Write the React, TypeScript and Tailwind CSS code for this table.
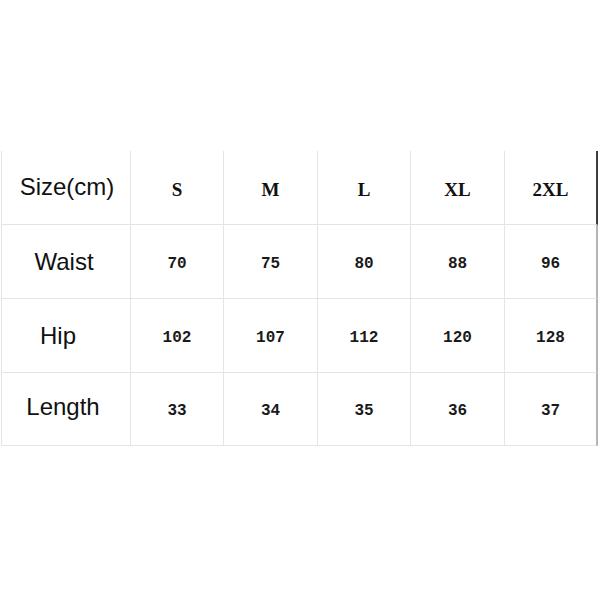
import React from "react";

const cols = ["S", "M", "L", "XL", "2XL"];
const rows: { label: string; vals: string[]; shift: string }[] = [
  { label: "Waist", vals: ["70", "75", "80", "88", "96"], shift: "pr-[4px] pt-[1px]" },
  { label: "Hip", vals: ["102", "107", "112", "120", "128"], shift: "pr-[16px]" },
  { label: "Length", vals: ["33", "34", "35", "36", "37"], shift: "pr-[6px] pb-[5px]" },
];
const heights = ["h-[74px]", "h-[74px]", "h-[73px]"];

export default function App() {
  return (
    <div className="w-[600px] h-[600px] bg-white pt-[151px]">
      <div className="ml-[1px] w-[597px] border-l border-[#e4e4e4] grid grid-cols-[129px_93px_94px_93px_94px_93px]">
        <div className="h-[74px] border-r border-b border-[#e4e4e4] flex items-center justify-center pl-[2px] pb-[1px] text-[24px] text-[#111] [font-family:'Liberation_Sans',Arial,sans-serif]">
          Size(cm)
        </div>
        {cols.map((c, i) => (
          <div
            key={c}
            className={`h-[74px] border-b border-[#e4e4e4] flex items-center justify-center pt-[6px] text-[19px] font-bold text-[#111] [font-family:'Liberation_Serif','Times_New_Roman',serif] ${
              i === 4 ? "border-r-2 border-r-[#3c3c44]" : "border-r"
            }`}
          >
            {c}
          </div>
        ))}
        {rows.map((r, ri) => (
          <React.Fragment key={r.label}>
            <div
              className={`${heights[ri]} border-r border-b border-[#e4e4e4] flex items-center justify-center ${r.shift} text-[24px] text-[#111] [font-family:'Liberation_Sans',Arial,sans-serif]`}
            >
              {r.label}
            </div>
            {r.vals.map((v, i) => (
              <div
                key={i}
                className={`${heights[ri]} border-b border-[#e4e4e4] flex items-center justify-center pt-[4px] text-[16px] font-bold text-[#1a1a1a] [font-family:'Liberation_Mono','Courier_New',monospace] ${
                  i === 4 ? "border-r-2 border-r-[#b4b4b4]" : "border-r"
                }`}
              >
                {v}
              </div>
            ))}
          </React.Fragment>
        ))}
      </div>
    </div>
  );
}
